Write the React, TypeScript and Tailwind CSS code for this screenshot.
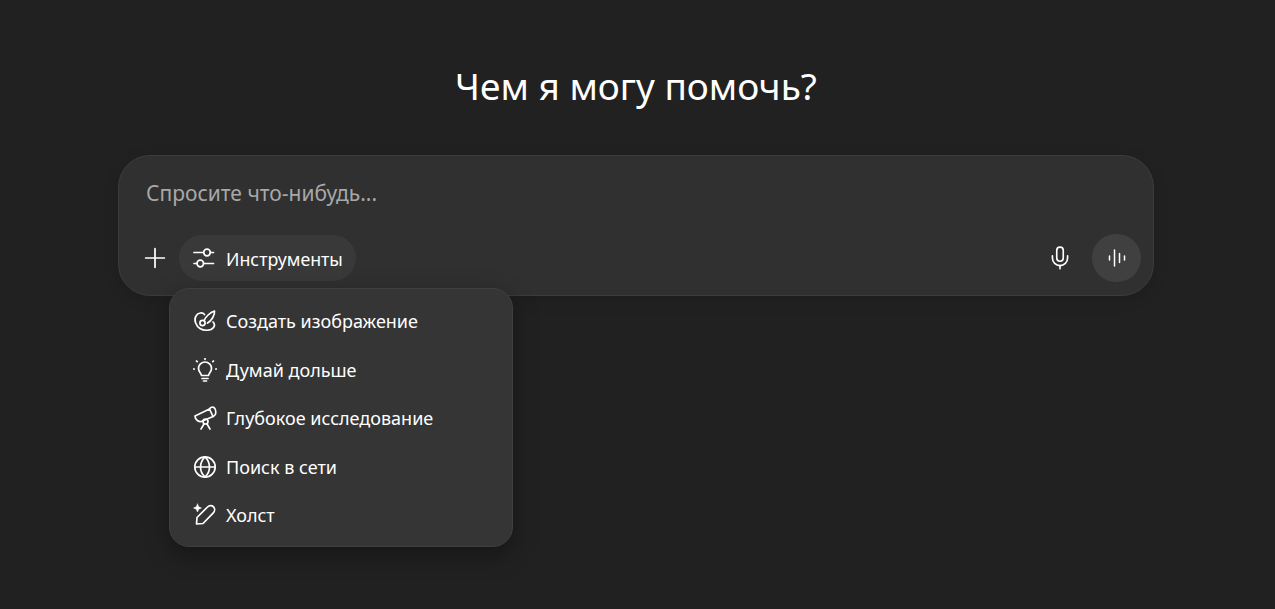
import { Mic, Plus } from 'lucide-react'

const Svg = ({ children }: { children: React.ReactNode }) => (
  <svg width="24" height="24" viewBox="0 0 24 24" fill="none" stroke="currentColor" strokeWidth="1.7" strokeLinecap="round" strokeLinejoin="round">
    {children}
  </svg>
)

const ToolsIcon = () => (
  <svg width="22" height="22" viewBox="0 0 22 22" fill="none" stroke="currentColor" strokeWidth="1.7" strokeLinecap="round">
    <path d="M1 5.500h9.500M17.500 5.500h3M1 16.500h3M10.500 16.500h10" />
    <circle cx="14" cy="5.500" r="3.300" />
    <circle cx="7.300" cy="16.500" r="3.300" />
  </svg>
)

const PaletteIcon = () => (
  <Svg>
    <path d="M11.500 5.500C9.500 3 5 3.500 3 7 .5 11 3 17 7 19.500c4 2.500 11 2.500 13.500-1 1.500-2 1-4-.5-5.500" />
    <path d="M11 11.500C12.500 8 17 3.500 21.500 2 22 6 18.500 12 14.500 14" />
    <circle cx="9.500" cy="14" r="2.600" />
  </Svg>
)

const BulbIcon = () => (
  <Svg>
    <path d="M8.500 17.500c0-2-3-3.500-3-7a6.500 6.500 0 0 1 13 0c0 3.500-3 5-3 7z" />
    <path d="M9 20.500h6M10.500 23h3" />
    <path d="M12 .5v.8M3.500 3l.7.7M20.500 3l-.7.7M.5 11h.8M22.700 11h.8" />
  </Svg>
)

const TelescopeIcon = () => (
  <Svg>
    <path d="M2 10 16.500 3l3.500 7.500-11.500 5C6 16 2 14 2 10z" />
    <path d="M16.500 3c1-1.800 3-2.500 4.500-1.500 1.500 1.200 2 4.500 1.500 6.500-.4 1-1.500 2-2.500 2.500" />
    <circle cx="12.500" cy="15.500" r="2.500" />
    <path d="M11 18 8 23M14 18l3 5" />
  </Svg>
)

const GlobeIcon = () => (
  <Svg>
    <circle cx="12" cy="12" r="10.200" />
    <path d="M2 12h20M12 1.800c-6 6-6 14.400 0 20.400M12 1.800c6 6 6 14.400 0 20.400" />
  </Svg>
)

const CanvasIcon = () => (
  <Svg>
    <path d="M3.500 21 4 14.500 14.500 4c1.800-1.800 4.500-1.800 6-.2s1.500 4.200-.2 6L10 20.500z" />
    <path d="M4.500 1 5.700 3.800 8.500 5 5.700 6.200 4.500 9 3.300 6.200.5 5 3.300 3.800z" fill="currentColor" strokeWidth="0.500" />
  </Svg>
)

const WaveIcon = () => (
  <svg width="20" height="20" viewBox="0 0 20 20" fill="none" stroke="currentColor" strokeWidth="1.500" strokeLinecap="round">
    <path d="M2.500 8v4M7.500 2v16M12.500 5.500v9M17.500 8v4" />
  </svg>
)

const tools = [
  { label: 'Создать изображение', icon: PaletteIcon },
  { label: 'Думай дольше', icon: BulbIcon },
  { label: 'Глубокое исследование', icon: TelescopeIcon },
  { label: 'Поиск в сети', icon: GlobeIcon },
  { label: 'Холст', icon: CanvasIcon },
]

export default function App() {
  return (
    <div className="h-[609px] pr-[3px] bg-[#212121] text-white font-['Noto_Sans','Open_Sans',sans-serif] flex flex-col items-center overflow-hidden">
      <h1 className="mt-[61px] h-[50px] text-[37px] leading-[50px] font-normal text-center">Чем я могу помочь?</h1>

      <div className="relative mt-[44px] w-[1036px] h-[141px] rounded-[32px] bg-[#303030] border border-[#3c3c3c] shadow-[0_4px_16px_rgba(0,0,0,0.12)] flex flex-col">
        <div className="pl-[27px] pt-[22px] h-[78px] text-[21px] leading-[30px] text-[#a8a8a8]">Спросите что-нибудь...</div>

        <div className="flex items-center pl-[20px] pr-[12px]">
          <Plus size={32} strokeWidth={1.3} />
          <div className="ml-[8px] h-[46px] w-[177px] rounded-full bg-[#393939] flex items-center pl-[14px] gap-[11px]">
            <ToolsIcon />
            <span className="pt-[1px] text-[17.800px] leading-[24px]">Инструменты</span>
          </div>
          <Mic size={26} strokeWidth={1.5} className="ml-auto mr-[19px]" />
          <div className="w-[49px] h-[48px] rounded-full bg-[#404040] flex items-center justify-center">
            <WaveIcon />
          </div>
        </div>

        <div className="absolute left-[50px] top-[132px] w-[344px] h-[259px] rounded-[20px] bg-[#353535] border border-[#3f3f3f] shadow-[0_8px_24px_rgba(0,0,0,0.35)] py-[8px] pl-[23px] flex flex-col">
          {tools.map((tool) => {
            const Icon = tool.icon
            return (
              <div key={tool.label} className="h-[48.500px] shrink-0 flex items-center gap-[9px]">
                <Icon />
                <span className="text-[18px] leading-[24px]">{tool.label}</span>
              </div>
            )
          })}
        </div>
      </div>
    </div>
  )
}
